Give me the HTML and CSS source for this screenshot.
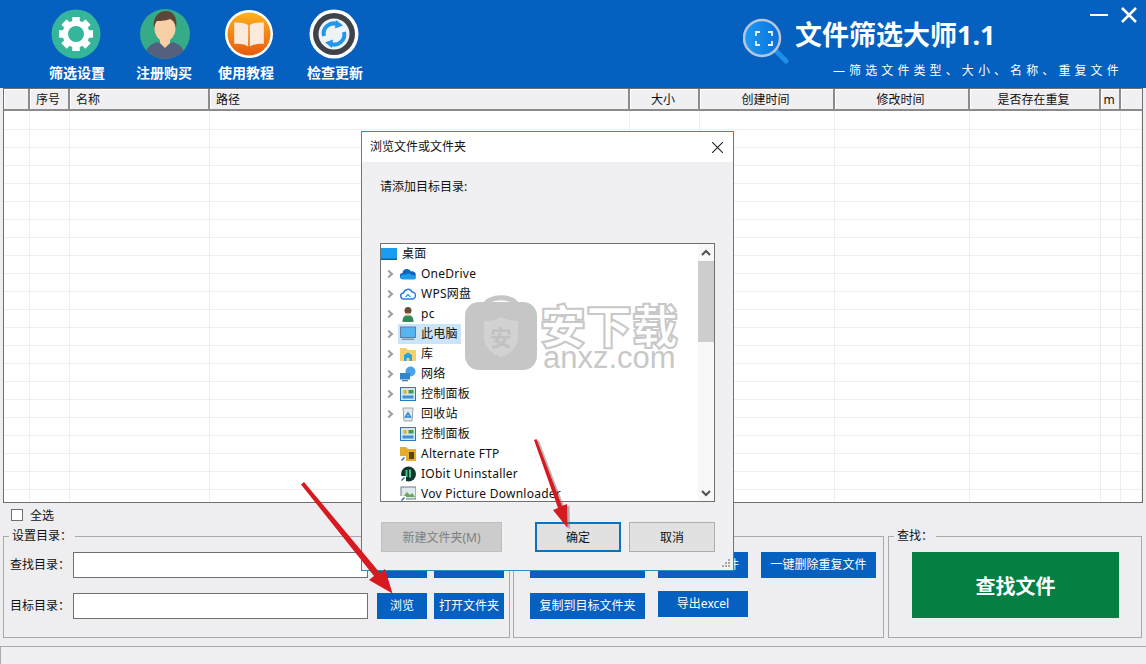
FILE: index.html
```html
<!DOCTYPE html>
<html lang="zh-CN">
<head>
<meta charset="utf-8">
<title>文件筛选大师1.1</title>
<link rel="stylesheet" href="styles.css">
</head>
<body>
<div class="app">
  <header class="topbar">
    <nav class="tools">
      <a class="tool tool-a">
        <svg class="tool-icon shift-a" viewBox="0 0 50 50"><circle cx="25" cy="25" r="24.5" fill="#35b69b"/><path stroke="#fff" stroke-width="7.500" d="M25 8v34M8 25h34M13 13l24 24M37 13L13 37"/><circle cx="25" cy="25" r="13.500" fill="#fff"/><circle cx="25" cy="25" r="8" fill="#35b69b"/></svg>
        <span>筛选设置</span>
      </a>
      <a class="tool tool-b">
        <svg class="tool-icon shift-b" viewBox="0 0 50 50"><defs><clipPath id="personClip"><circle cx="25" cy="25" r="25"/></clipPath></defs><circle cx="25" cy="25" r="25" fill="#35ab88"/><g clip-path="url(#personClip)"><path fill="#55607f" d="M5 50c0-11 5-15 13-17l7 5 7-5c8 2 13 6 13 17z"/><path fill="#f7cfa3" d="M20 27h10v7l-5 5-5-5z"/><ellipse cx="25" cy="19" rx="10.500" ry="13.500" fill="#f9d0a6"/><path fill="#5b4638" d="M14 19c-2-11 5-17 12-17s12 6 10 17c-1-5-3-8-6-9-5 2-11 2-13 2-2 2-2 4-3 7z"/></g></svg>
        <span>注册购买</span>
      </a>
      <a class="tool tool-c">
        <svg class="tool-icon shift-c" viewBox="0 0 50 50"><defs><linearGradient id="bookGrad" x1="0" y1="0" x2="0" y2="1"><stop offset="0" stop-color="#fdb21e"/><stop offset="1" stop-color="#e8590c"/></linearGradient></defs><circle cx="25" cy="25" r="24" fill="#fff"/><circle cx="25" cy="25" r="21.500" fill="url(#bookGrad)"/><path fill="#fbe9dc" d="M24.200 16c-4-2.400-10-3-14-2.400V35c4.500-.6 10 0 14 2.400zM25.800 16c4-2.400 10-3 14-2.400V35c-4.500-.6-10 0-14 2.400z"/></svg>
        <span>使用教程</span>
      </a>
      <a class="tool tool-d">
        <svg class="tool-icon shift-d" viewBox="0 0 50 50"><circle cx="25" cy="25" r="24.500" fill="#fff"/><circle cx="25" cy="25" r="21" fill="#3f4347"/><circle cx="25" cy="25" r="15.500" fill="#eef3f8"/><path fill="none" stroke="#2596e6" stroke-width="4" d="M15 27a10 10 0 0 1 14-11.500M35 23a10 10 0 0 1-14 11.500"/><path fill="#2596e6" d="M27 11l7 5.500-8 3zM23 39l-7-5.500 8-3z"/></svg>
        <span>检查更新</span>
      </a>
    </nav>
    <div class="brand">
      <svg class="brand-logo" viewBox="0 0 48 46"><defs><linearGradient id="lensGrad" x1="0" y1="0" x2="1" y2="0"><stop offset="0" stop-color="#1e9bf6"/><stop offset="1" stop-color="#0a6fd8"/></linearGradient></defs><path stroke="#1d8fe8" stroke-width="5" stroke-linecap="round" d="M32 32l11 11"/><circle cx="19" cy="20" r="18" fill="url(#lensGrad)" stroke="#b8c6dc" stroke-width="2.500"/><path fill="none" stroke="#e8f4ff" stroke-width="1.800" d="M13 18v-4h4M25 14h4v4M29 23v4h-4M17 27h-4v-4"/></svg>
      <div class="brand-text">
        <h1 class="brand-title">文件筛选大师1.1</h1>
        <p class="brand-sub">—筛选文件类型、大小、名称、重复文件</p>
      </div>
    </div>
    <div class="win-controls">
      <svg class="win-icon" viewBox="0 0 18 18"><path stroke="#fff" stroke-width="2" d="M0 9h18"/></svg>
      <svg class="win-icon" viewBox="0 0 18 18"><path stroke="#fff" stroke-width="2.500" d="M2 2l14 14M16 2L2 16"/></svg>
    </div>
  </header>

  <section class="grid-wrap">
    <table class="grid">
      <colgroup><col class="c0"><col class="c1"><col class="c2"><col class="c3"><col class="c4"><col class="c5"><col class="c6"><col class="c7"><col class="c8"><col></colgroup>
      <thead>
        <tr><th></th><th>序号</th><th class="left">名称</th><th class="left">路径</th><th>大小</th><th>创建时间</th><th>修改时间</th><th>是否存在重复</th><th>m</th><th></th></tr>
      </thead>
      <tbody id="rows"></tbody>
    </table>
  </section>

  <label class="select-all"><span class="check"></span>全选</label>

  <section class="panels">
    <fieldset class="group group-dir">
      <legend>设置目录：</legend>
      <div class="dir-grid">
        <span class="dir-label">查找目录：</span><span class="field"></span><button class="btn">浏览</button><button class="btn">打开文件夹</button>
        <span class="dir-label">目标目录：</span><span class="field"></span><button class="btn">浏览</button><button class="btn">打开文件夹</button>
      </div>
    </fieldset>
    <fieldset class="group group-ops">
      <legend class="blank"></legend>
      <div class="ops-grid">
        <button class="btn">移动到目标文件夹</button><button class="btn">删除选中文件</button><button class="btn">一键删除重复文件</button>
        <button class="btn">复制到目标文件夹</button><button class="btn btn-up">导出excel</button>
      </div>
    </fieldset>
    <fieldset class="group group-find">
      <legend>查找：</legend>
      <button class="btn-find">查找文件</button>
    </fieldset>
  </section>

  <footer class="status"></footer>
</div>

<div class="dialog">
  <div class="dialog-title">
    <span>浏览文件或文件夹</span>
    <svg class="dialog-close" viewBox="0 0 10 10"><path stroke="#222" stroke-width="1" d="M0 0l10 10M10 0L0 10"/></svg>
  </div>
  <div class="dialog-body">
    <p class="dialog-label">请添加目标目录:</p>
    <div class="tree">
      <ul class="tree-list">
        <li class="node root"><svg class="ico" viewBox="0 0 16 16"><rect x="0" y="2" width="16" height="12" fill="#1a9cf0"/><rect x="0" y="12.500" width="16" height="1.500" fill="#0b63b5"/></svg><span>桌面</span></li>
        <li class="node"><i class="chev"></i><svg class="ico" viewBox="0 0 16 16"><path fill="#0a64c2" d="M3 13a3 3 0 0 1-.5-6 4.500 4.500 0 0 1 8.500-1.500A3.500 3.500 0 0 1 15.500 10a3 3 0 0 1-2.500 3z"/><path fill="#1c9be6" d="M3 13.500c-2 0-2.800-1.500-2.500-3C1 9 3 8 5 9c2-2 5-2 6.500 0 2 0 4.500.5 4.500 2.500 0 1.200-1 2-2 2z"/></svg><span>OneDrive</span></li>
        <li class="node"><i class="chev"></i><svg class="ico" viewBox="0 0 16 16"><path fill="none" stroke="#2f78dc" stroke-width="1.500" d="M4 13a3 3 0 0 1-.5-6A4.500 4.500 0 0 1 12 6a3.500 3.500 0 0 1 0 7z"/><path fill="none" stroke="#26b4d8" stroke-width="1.500" d="M5.500 11l2.500-2.500 2.500 2.500"/></svg><span>WPS网盘</span></li>
        <li class="node"><i class="chev"></i><svg class="ico" viewBox="0 0 16 16"><circle cx="8" cy="4.500" r="3.500" fill="#6d4a34"/><path fill="#2e8b57" d="M2.500 16c0-5 2-7 5.500-7s5.500 2 5.500 7z"/><path fill="#e8c09a" d="M6.500 7h3v3h-3z"/></svg><span>pc</span></li>
        <li class="node selected"><i class="chev"></i><svg class="ico" viewBox="0 0 16 16"><rect x=".5" y="1" width="15" height="10.500" fill="#56b4f0" stroke="#5e7f9b"/><rect x="2" y="12.500" width="12" height="1.500" fill="#7d95a9"/></svg><span>此电脑</span></li>
        <li class="node"><i class="chev"></i><svg class="ico" viewBox="0 0 16 16"><path fill="#f4cf6a" d="M0 2h6l2 2h8v11H0z"/><path fill="#2aa2e6" d="M4 15V9l4-2.500L12 9v6H9.500v-3h-3v3z"/></svg><span>库</span></li>
        <li class="node"><i class="chev"></i><svg class="ico" viewBox="0 0 16 16"><circle cx="10.500" cy="5.500" r="5" fill="#4aa3e8"/><rect x="0" y="7" width="10" height="6.500" fill="#2f86cf"/><rect x="2" y="14" width="6" height="1.300" fill="#5d7a92"/></svg><span>网络</span></li>
        <li class="node"><i class="chev"></i><svg class="ico" viewBox="0 0 16 16"><rect x=".5" y="1.500" width="15" height="13" fill="#cfe6f7" stroke="#2b7db8"/><circle cx="5" cy="6" r="2" fill="#e3b23c"/><rect x="8.500" y="4" width="5" height="3.500" fill="#3f9a52"/><rect x="2.500" y="9.500" width="11" height="3" fill="#4290d2"/></svg><span>控制面板</span></li>
        <li class="node"><i class="chev"></i><svg class="ico" viewBox="0 0 16 16"><path fill="#e4e8ec" stroke="#9aa4ad" d="M3 2h10l-1 13H4z"/><path fill="none" stroke="#2b86d6" stroke-width="1.500" d="M5.500 11l2.500-4 2.500 4z"/></svg><span>回收站</span></li>
        <li class="node"><i class="chev none"></i><svg class="ico" viewBox="0 0 16 16"><rect x=".5" y="1.500" width="15" height="13" fill="#cfe6f7" stroke="#2b7db8"/><circle cx="5" cy="6" r="2" fill="#e3b23c"/><rect x="8.500" y="4" width="5" height="3.500" fill="#3f9a52"/><rect x="2.500" y="9.500" width="11" height="3" fill="#4290d2"/></svg><span>控制面板</span></li>
        <li class="node"><i class="chev none"></i><svg class="ico" viewBox="0 0 16 16"><path fill="#e2ac2e" d="M0 1h6l2 2h8v12H0z"/><path fill="#5a4322" d="M9 6h5v7H9z"/><rect x="0" y="10" width="6" height="6" fill="#fff"/><path stroke="#1b5fb0" stroke-width="1.300" d="M1.500 14.500l3-3"/></svg><span>Alternate FTP</span></li>
        <li class="node"><i class="chev none"></i><svg class="ico" viewBox="0 0 16 16"><circle cx="8.500" cy="8" r="7.500" fill="#13352c"/><path fill="none" stroke="#38c98a" stroke-width="2" d="M6.500 4v7M10 3.500v8"/><rect x="0" y="10" width="6" height="6" fill="#fff"/><path stroke="#1b5fb0" stroke-width="1.300" d="M1.500 14.500l3-3"/></svg><span>IObit Uninstaller</span></li>
        <li class="node"><i class="chev none"></i><svg class="ico" viewBox="0 0 16 16"><rect x="1" y="1" width="15" height="12" fill="#dfe8ee" stroke="#6c7f8c"/><path fill="#6aa84f" d="M3 11l4-5 3 3 2-2 3 4z"/><rect x="0" y="10" width="6" height="6" fill="#fff"/><path stroke="#1b5fb0" stroke-width="1.300" d="M1.500 14.500l3-3"/></svg><span>Vov Picture Downloader</span></li>
      </ul>
      <div class="scroll">
        <svg class="scroll-arrow" viewBox="0 0 16 17"><path fill="none" stroke="#505050" stroke-width="2" d="M4 11l4-4 4 4"/></svg>
        <div class="scroll-track"><div class="scroll-thumb"></div></div>
        <svg class="scroll-arrow" viewBox="0 0 16 17"><path fill="none" stroke="#505050" stroke-width="2" d="M4 7l4 4 4-4"/></svg>
      </div>
    </div>
    <div class="dialog-actions">
      <button class="dbtn dbtn-new">新建文件夹(M)</button>
      <button class="dbtn dbtn-ok">确定</button>
      <button class="dbtn">取消</button>
    </div>
  </div>
  <svg class="grip" viewBox="0 0 10 10"><path fill="#a8a8a8" d="M7 1h2v2H7zM4 4h2v2H4zM7 4h2v2H7zM1 7h2v2H1zM4 7h2v2H4zM7 7h2v2H7z"/></svg>
</div>

<div class="watermark">
  <svg class="wm-lock" viewBox="0 0 72 80"><path fill="none" stroke="#c6c6c6" stroke-width="5" d="M20 16C22 5 50 5 52 16"/><rect x="0" y="12" width="72" height="68" rx="14" fill="#c6c6c6"/><path fill="#d2d2d2" d="M36 27c6 3 11 4 17 4v16c0 10-8 17-17 20-9-3-17-10-17-20V31c6 0 11-1 17-4z"/><text x="36" y="56" text-anchor="middle" class="wm-shield">安</text></svg>
  <div class="wm-text">
    <div class="wm-cn">安下载</div>
    <div class="wm-en">anxz.com</div>
  </div>
</div>

<svg class="arrows" viewBox="0 0 1146 664">
  <g fill="#707070" opacity=".5" transform="translate(2.500 1.500)">
    <path d="M534 440l2.500-1 25.500 67 5-2 .5 24-14.500-18 5-2z"/>
  </g>
  <g fill="#d71920">
    <path d="M301 484.500l3-2.500 76 91 5-4 7.500 24.500-23.500-13.500 5-4z"/>
    <path d="M534 440l2.500-1 25.500 67 5-2 .5 24-14.500-18 5-2z"/>
  </g>
</svg>
<script src="app.js"></script>
</body>
</html>
```

FILE: app.js
```js
var rows = document.getElementById('rows');
var html = '';
for (var i = 0; i < 22; i++) {
  html += '<tr>' + new Array(11).join('<td></td>') + '</tr>';
}
rows.innerHTML = html;
```

FILE: styles.css
```css
* { box-sizing: border-box; }
html, body { margin: 0; height: 664px; overflow: hidden; }
body {
  position: relative;
  background: #eeedf0;
  color: #111;
  font: 12px/1.2 "Noto Sans", "Noto Sans CJK SC", sans-serif;
}
.app { display: flex; flex-direction: column; height: 664px; }

/* top bar */
.topbar {
  position: relative;
  display: flex;
  height: 88px;
  flex: none;
  background: #0560bf;
  color: #fff;
}
.tools { display: flex; padding: 9px 0 0 33px; }
.tool { display: flex; flex-direction: column; align-items: center; }
.tool span { margin-top: 4px; font-size: 14px; line-height: 20px; font-weight: 700; white-space: nowrap; }
.tool-a { width: 88px; }
.tool-b { width: 86px; }
.tool-c { width: 78px; }
.tool-d { width: 100px; }
.tool-icon { display: block; width: 50px; height: 50px; }
.shift-a { margin-left: -2px; }
.shift-b { margin-left: 2px; }
.shift-c { margin-left: 6px; }
.shift-d { margin-left: -2px; }

.brand { display: flex; margin-left: 358px; padding-top: 18px; }
.brand-logo { width: 48px; height: 46px; flex: none; }
.brand-text { margin-left: 4px; }
.brand-title { margin: 0; font-size: 27px; line-height: 34px; font-weight: 700; white-space: nowrap; }
.brand-sub { margin: 11px 0 0 38px; font-size: 12px; line-height: 16px; letter-spacing: 4.100px; white-space: nowrap; }
.win-controls { position: absolute; top: 6px; right: 8px; display: flex; gap: 12px; }
.win-icon { width: 18px; height: 18px; }

/* table */
.grid-wrap {
  flex: none;
  height: 415px;
  margin: 0 3px;
  overflow: hidden;
  background: #fff;
  border: 1px solid #707070;
}
.grid { width: 100%; border-collapse: separate; border-spacing: 0; table-layout: fixed; }
.c0 { width: 26px; }
.c1 { width: 40px; }
.c2 { width: 140px; }
.c3 { width: 420px; }
.c4 { width: 70px; }
.c5 { width: 135px; }
.c6 { width: 135px; }
.c7 { width: 131px; }
.c8 { width: 20px; }
.grid th {
  height: 22px;
  padding: 2px 2px 0 0;
  background: #f0eff1;
  border-right: 2px solid #8b8b8b;
  border-bottom: 2px solid #8b8b8b;
  box-shadow: inset 1px 1px 0 #fff;
  font-weight: 400;
  font-size: 12px;
  text-align: center;
}
.grid th:last-child { border-right: 0; }
.grid th.left { padding-left: 6px; text-align: left; }
.grid td { height: 18px; padding: 0; border-right: 1px solid #eeeeee; border-bottom: 1px solid #eeeeee; }
.grid tbody tr:first-child td { height: 19px; }

/* bottom */
.select-all { display: flex; flex: none; align-items: center; height: 25px; padding: 1px 0 0 11px; font-size: 12px; }
.check { width: 12px; height: 12px; margin: -2px 7px 0 0; background: #fff; border: 1px solid #6f6f6f; }

.panels { display: flex; flex: none; height: 110px; padding: 0 4px 0 3px; gap: 3px; }
.group { margin: 0; padding: 8px 6px 0; border: 1px solid #a9a9a9; border-radius: 0; min-width: 0; }
.group legend { margin-left: -1px; padding: 0 3px; font-size: 12px; line-height: 16px; }
.group legend.blank { height: 16px; }
.group-dir { width: 507px; }
.group-ops { width: 371px; padding-left: 16px; }
.group-find { width: 254px; margin-left: 1px; padding-left: 23px; }
.group-find legend { margin-left: -18px; }

.dir-grid { display: grid; grid-template-columns: 63px 295px 59px 77px; row-gap: 15px; align-items: center; }
.dir-grid .btn { width: 50px; margin-left: 9px; }
.dir-grid .btn:nth-of-type(even) { width: 70px; margin-left: 7px; }
.dir-label { white-space: nowrap; }
.field { display: block; height: 26px; background: #fff; border: 1px solid #707070; }

.btn {
  display: block;
  height: 26px;
  padding: 0;
  border: 0;
  background: #0560bf;
  color: #fff;
  font: 12px/26px "Noto Sans", "Noto Sans CJK SC", sans-serif;
  white-space: nowrap;
}
.ops-grid { display: grid; grid-template-columns: 115px 90px 115px; column-gap: 13px; row-gap: 15px; }
.btn-up { margin-top: -2px; }
.btn-find {
  display: block;
  width: 207px;
  height: 66px;
  padding: 0;
  border: 0;
  background: #067f45;
  color: #fff;
  font: 700 20px "Noto Sans", "Noto Sans CJK SC", sans-serif;
}
.status { flex: none; height: 18px; margin-top: 8px; background: #f0eff1; border-top: 1px solid #aaa; border-left: 1px solid #aaa; }

/* dialog */
.dialog {
  position: absolute;
  left: 361px;
  top: 131px;
  width: 373px;
  height: 440px;
  background: #f0eff1;
  border: 1px solid #2b8cbe;
  display: flex;
  flex-direction: column;
}
.dialog-title { display: flex; flex: none; align-items: center; justify-content: space-between; height: 30px; padding: 0 10px 0 8px; background: #fff; font-size: 12px; }
.dialog-close { width: 11px; height: 11px; }
.dialog-body { flex: 1; padding: 0 18px; }
.dialog-label { height: 81px; margin: 0; padding-top: 17px; font-size: 12px; line-height: 16px; }
.tree { display: flex; height: 259px; background: #fff; border: 1px solid #707070; overflow: hidden; }
.tree-list { flex: 1; margin: 0; padding: 0; list-style: none; overflow: hidden; }
.node { display: flex; align-items: center; height: 20px; padding-left: 3px; font-size: 12px; letter-spacing: .25px; white-space: nowrap; }
.node.root { padding-left: 0; }
.chev { flex: none; width: 6px; height: 6px; margin: 0 8px 0 2px; border-top: 2px solid #a0a0a0; border-right: 2px solid #a0a0a0; transform: rotate(45deg); }
.chev.none { visibility: hidden; }
.ico { flex: none; width: 16px; height: 16px; }
.node span { padding: 2px 3px 2px 5px; line-height: 16px; }
.selected span { background: #cce4f7; }
.selected .ico { background: #cce4f7; outline: 2px solid #cce4f7; }
.scroll { display: flex; flex: none; flex-direction: column; width: 16px; background: #f8f8f8; }
.scroll-arrow { display: block; flex: none; width: 16px; height: 17px; }
.scroll-track { flex: 1; }
.scroll-thumb { height: 81px; background: #cdcdcd; }
.dialog-actions { display: flex; margin-top: 20px; padding-left: 1px; }
.dbtn {
  width: 86px;
  height: 30px;
  margin-left: 8px;
  padding: 0;
  background: #e1e1e1;
  border: 1px solid #adadad;
  color: #111;
  font: 12px "Noto Sans", "Noto Sans CJK SC", sans-serif;
}
.dbtn-new { width: 121px; margin: 0 33px 0 0; background: #cccccc; border-color: #bfbfbf; color: #808080; }
.dbtn-ok { margin: 0; border: 2px solid #0a73c0; }
.grip { position: absolute; right: 2px; bottom: 2px; width: 10px; height: 10px; }

/* watermark */
.watermark { position: absolute; left: 465px; top: 290px; display: flex; gap: 3px; pointer-events: none; }
.wm-lock { width: 72px; height: 80px; flex: none; }
.wm-shield { font: 700 22px "Noto Sans CJK SC", sans-serif; fill: #c2c2c2; }
.wm-text { color: #c8c8c8; }
.wm-cn { margin-top: 10px; height: 46px; font: 900 46px/46px "Noto Sans CJK SC", sans-serif; color: #fff; -webkit-text-stroke: 2px #c8c8c8; white-space: nowrap; }
.wm-en { margin-top: -3px; padding-left: 3px; font: 31px/30px "Liberation Sans", sans-serif; white-space: nowrap; }

.arrows { position: absolute; left: 0; top: 0; width: 1146px; height: 664px; pointer-events: none; }
```
